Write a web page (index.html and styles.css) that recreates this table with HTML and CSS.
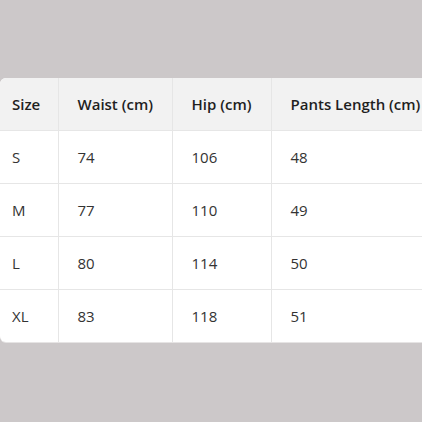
FILE: index.html
```html
<!DOCTYPE html>
<html>
<head>
<meta charset="utf-8">
<link rel="stylesheet" href="styles.css">
</head>
<body>
<div class="stage">
  <div class="card">
    <table class="sizes">
      <colgroup>
        <col class="c1"><col class="c2"><col class="c3"><col class="c4">
      </colgroup>
      <thead>
        <tr><th>Size</th><th>Waist (cm)</th><th>Hip (cm)</th><th>Pants Length (cm)</th></tr>
      </thead>
      <tbody>
        <tr><td>S</td><td>74</td><td>106</td><td>48</td></tr>
        <tr><td>M</td><td>77</td><td>110</td><td>49</td></tr>
        <tr><td>L</td><td>80</td><td>114</td><td>50</td></tr>
        <tr><td>XL</td><td>83</td><td>118</td><td>51</td></tr>
      </tbody>
    </table>
  </div>
</div>
</body>
</html>
```
FILE: styles.css
```css
html, body {
  margin: 0;
  padding: 0;
  background: #ccc8c9;
  overflow: hidden;
}
.stage {
  height: 422px;
  width: 422px;
  box-sizing: border-box;
  padding-top: 78px;
  overflow: hidden;
  display: flex;
  align-items: flex-start;
  justify-content: flex-start;
}
.card {
  width: 460px;
  flex: none;
  background: #fff;
  border-radius: 6px;
  overflow: hidden;
  box-shadow: 0 1px 0 #e6e4e4;
}
.sizes {
  width: 460px;
  border-collapse: collapse;
  table-layout: fixed;
  font-family: "Open Sans", "Noto Sans", sans-serif;
  font-size: 15px;
  color: #333;
}
.c1 { width: 58px; }
.c2 { width: 114px; }
.c3 { width: 99px; }
.c4 { width: 189px; }
.sizes th, .sizes td {
  height: 52px;
  padding: 0 0 0 19px;
  text-align: left;
  vertical-align: middle;
  border-right: 1px solid #e6e6e6;
  border-bottom: 1px solid #e6e6e6;
  white-space: nowrap;
}
.sizes th:first-child, .sizes td:first-child {
  padding-left: 12px;
}
.sizes tbody tr:last-child td {
  border-bottom: none;
}
.sizes th {
  background: #f2f2f2;
  font-weight: 600;
  color: #1f1f1f;
}
```
